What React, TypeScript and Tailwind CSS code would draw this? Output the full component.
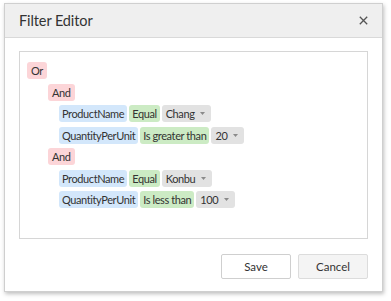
import React from "react";

const font = { fontFamily: 'Lato, "Noto Sans", sans-serif' };

function Chip({ kind, children, dd }: { kind: "group" | "field" | "op" | "val"; children: React.ReactNode; dd?: boolean }) {
  const cls =
    kind === "group"
      ? "bg-[#fcd5d8] px-[4px]"
      : kind === "field"
      ? "bg-[#d3e7fb] px-[3px]"
      : kind === "op"
      ? "bg-[#ccebc4] px-[3px]"
      : "bg-[#e2e2e2] pl-[4px] pr-[6px]";
  return (
    <span className={`inline-flex items-center h-[17px] rounded-[3px] text-[11px] tracking-[-0.4px] leading-none text-[#333] ${cls}`}>
      {children}
      {dd && (
        <svg width="5" height="3" viewBox="0 0 5 3" className="ml-[6px]">
          <path d="M0 0h5L2.5 3z" fill="#8a8a8a" />
        </svg>
      )}
    </span>
  );
}

function Cond({ field, op, val }: { field: string; op: string; val: string }) {
  return (
    <div className="flex gap-[2px] pl-[32px]">
      <Chip kind="field">{field}</Chip>
      <Chip kind="op">{op}</Chip>
      <Chip kind="val" dd>
        {val}
      </Chip>
    </div>
  );
}

export default function App() {
  return (
    <div className="w-[391px] h-[301px] bg-white pt-[3px] pl-[4px]" style={font}>
      <div className="w-[379px] h-[289px] flex flex-col bg-white border border-[#cfcfcf] shadow-[1px_2px_4px_rgba(0,0,0,0.25)]">
        <div className="h-[34px] shrink-0 flex items-center justify-between bg-[#efefef] border-b border-[#d9d9d9] pl-[14px] pr-[14px]">
          <span className="text-[14.5px] tracking-[-0.1px] text-[#333]">Filter Editor</span>
          <svg width="9" height="9" viewBox="0 0 9 9">
            <path d="M0.8 0.8l7.4 7.4M8.2 0.8l-7.4 7.4" stroke="#555" strokeWidth="1.3" />
          </svg>
        </div>
        <div className="px-[14px] pt-[13px]">
          <div className="h-[188px] border border-[#d6d6d6] pt-[10px] pl-[7px] flex flex-col gap-[4.5px]">
            <div className="flex">
              <Chip kind="group">Or</Chip>
            </div>
            <div className="flex pl-[21px]">
              <Chip kind="group">And</Chip>
            </div>
            <Cond field="ProductName" op="Equal" val="Chang" />
            <Cond field="QuantityPerUnit" op="Is greater than" val="20" />
            <div className="flex pl-[21px]">
              <Chip kind="group">And</Chip>
            </div>
            <Cond field="ProductName" op="Equal" val="Konbu" />
            <Cond field="QuantityPerUnit" op="Is less than" val="100" />
          </div>
        </div>
        <div className="flex justify-end gap-[7px] pr-[14px] pt-[15px]">
          <button className="w-[70px] h-[25px] border border-[#cfcfcf] rounded-[2px] bg-white text-[11.5px] text-[#333]">Save</button>
          <button className="w-[70px] h-[25px] border border-[#dcdcdc] rounded-[2px] bg-[#f4f4f4] text-[11.5px] text-[#333]">Cancel</button>
        </div>
      </div>
    </div>
  );
}
